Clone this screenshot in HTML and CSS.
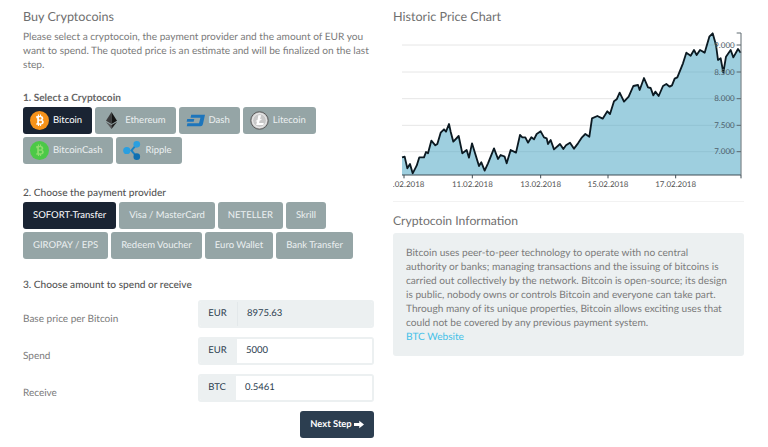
FILE: index.html
```html
<!DOCTYPE html>
<html lang="en">
<head>
<meta charset="utf-8">
<title>Buy Cryptocoins</title>
<link rel="stylesheet" href="styles.css">
</head>
<body>
<main class="page">
  <section class="col">
    <h2 class="title">Buy Cryptocoins</h2>
    <p class="intro">Please select a cryptocoin, the payment provider and the amount of EUR you want to spend. The quoted price is an estimate and will be finalized on the last step.</p>

    <h3 class="step step-first">1. Select a Cryptocoin</h3>
    <div class="btns">
      <button class="btn coin active"><svg class="ico" viewBox="0 0 20 20"><circle cx="10" cy="10" r="10" fill="#f7931a"/><path fill="#fff" fill-rule="evenodd" d="M6.6 5.2h1.7V3.8h1.2v1.4h1V3.8h1.2v1.5c1.5.3 2.3 1.1 2.3 2.3 0 .9-.4 1.6-1.2 1.9 1.1.3 1.7 1.1 1.7 2.2 0 1.5-1.1 2.5-2.8 2.6v1.5h-1.2v-1.4h-1v1.4H8.3v-1.4H6.6v-1.4h1v-5.4h-1zM9.400 6.700v2.300h1.500c.8 0 1.200-.4 1.200-1.100s-.4-1.200-1.200-1.200zM9.400 10.300v2.600h1.800c.9 0 1.400-.5 1.400-1.300s-.5-1.300-1.400-1.300z"/></svg>Bitcoin</button>
      <button class="btn coin"><svg class="ico" viewBox="0 0 20 20"><path fill="#3c3c3d" d="M10 1 4.200 10.300 10 13.700z"/><path fill="#141414" d="M10 1l5.800 9.300L10 13.700z"/><path fill="#5a5a5b" d="M4.200 11.500 10 19v-4.200z"/><path fill="#222" d="M15.800 11.500 10 19v-4.200z"/></svg>Ethereum</button>
      <button class="btn coin"><svg class="ico" viewBox="0 0 20 20"><path fill="#1c75bc" d="M5.500 4H20l-2.200 10a2.600 2.600 0 0 1-2.600 2H.8l.7-3.200h12.200l1.500-5.600H4.800z"/><path fill="#1c75bc" d="M1.300 8.500h7.400l-.6 2.800H.7z"/></svg>Dash</button>
      <button class="btn coin"><svg class="ico" viewBox="0 0 20 20"><circle cx="10" cy="10" r="9.200" fill="#c8c8c8" stroke="#555" stroke-width="1"/><circle cx="10" cy="10" r="7.300" fill="none" stroke="#f2f2f2" stroke-width="1"/><path fill="#fff" d="M8.800 4.500h2.800l-1 4.200 1.700-.6-.4 1.300-1.700.6-.7 2.700h5l-.5 2H6.500l1-3.900-1.500.6.300-1.200 1.600-.6z"/></svg>Litecoin</button>
      <button class="btn coin"><svg class="ico" viewBox="0 0 20 20"><circle cx="10" cy="10" r="10" fill="#4cc947"/><path fill="#8fdc6e" fill-rule="evenodd" d="M6.600 5.200h1.700V3.800h1.200v1.400h1V3.800h1.200v1.500c1.500.3 2.300 1.100 2.300 2.300 0 .9-.4 1.600-1.200 1.900 1.100.3 1.700 1.100 1.700 2.200 0 1.500-1.100 2.500-2.800 2.600v1.500h-1.200v-1.400h-1v1.400H8.300v-1.400H6.600v-1.400h1v-5.400h-1zM9.400 6.700v2.300h1.500c.8 0 1.200-.4 1.200-1.100s-.4-1.200-1.200-1.200zM9.400 10.300v2.600h1.800c.9 0 1.400-.5 1.400-1.300s-.5-1.300-1.400-1.300z"/></svg>BitcoinCash</button>
      <button class="btn coin"><svg class="ico" viewBox="0 0 20 20"><path fill="none" stroke="#1a82c4" stroke-width="2.200" d="M14.500 3.500 10 8.600a3 3 0 0 1-1 1.400 3 3 0 0 1 1 1.400l4.500 5.100"/><circle cx="14.500" cy="3.500" r="3.500" fill="#2a9fe0"/><circle cx="4" cy="10" r="3.800" fill="#2a9fe0"/><circle cx="14.500" cy="16.500" r="3.500" fill="#0f6fb0"/></svg>Ripple</button>
    </div>

    <h3 class="step step-light step-second">2. Choose the payment provider</h3>
    <div class="btns">
      <button class="btn active">SOFORT-Transfer</button>
      <button class="btn">Visa / MasterCard</button>
      <button class="btn">NETELLER</button>
      <button class="btn">Skrill</button>
      <button class="btn">GIROPAY / EPS</button>
      <button class="btn">Redeem Voucher</button>
      <button class="btn">Euro Wallet</button>
      <button class="btn">Bank Transfer</button>
    </div>

    <h3 class="step step-light step-third">3. Choose amount to spend or receive</h3>
    <div class="form">
      <div class="form-row">
        <span class="label">Base price per Bitcoin</span>
        <div class="group readonly"><span class="addon">EUR</span><span class="value">8975.63</span></div>
      </div>
      <div class="form-row">
        <span class="label">Spend</span>
        <div class="group"><span class="addon">EUR</span><span class="value">5000</span></div>
      </div>
      <div class="form-row">
        <span class="label">Receive</span>
        <div class="group"><span class="addon addon-btc">BTC</span><span class="value">0.5461</span></div>
      </div>
    </div>
    <div class="actions">
      <button class="next">Next Step<svg class="arrow" viewBox="0 0 12 10"><path fill="#fff" d="M0 3.200h6.300V.4L12 5 6.300 9.600V6.800H0z"/></svg></button>
    </div>
  </section>

  <section class="col">
    <h2 class="title">Historic Price Chart</h2>
    <svg class="chart" viewBox="27 90 1050 495">
      <g class="grid">
        <path d="M54 135H1071M54 216H1071M54 296H1071M54 376H1071M54 455H1071"/>
      </g>
      <path class="area" d="M54 525V472L62 470 70 505 78 492 86 520 98 497 106 472 120 472 126 456 132 460 142 422 154 436 160 432 170 398 180 388 186 395 195 372 200 395 208 425 224 408 235 460 248 450 255 473 264 430 285 498 292 487 302 512 312 490 330 445 342 477 350 465 362 470 368 490 380 450 396 458 408 405 415 412 424 412 432 428 442 412 450 418 458 402 470 394 480 412 488 415 492 432 500 420 510 448 528 432 538 447 546 436 552 432 558 428 570 446 582 430 594 412 604 402 616 410 624 355 640 348 656 356 670 334 678 342 690 304 698 298 707 278 720 305 734 290 748 258 762 255 767 270 780 234 792 262 800 264 808 286 814 275 824 288 837 258 847 252 857 260 864 256 872 236 880 232 897 190 907 158 920 167 930 150 938 165 948 150 962 158 976 110 986 100 996 135 1002 180 1010 175 1018 218 1026 170 1040 150 1048 172 1062 147 1070 158V525z"/>
      <path class="line" d="M54 472L62 470 70 505 78 492 86 520 98 497 106 472 120 472 126 456 132 460 142 422 154 436 160 432 170 398 180 388 186 395 195 372 200 395 208 425 224 408 235 460 248 450 255 473 264 430 285 498 292 487 302 512 312 490 330 445 342 477 350 465 362 470 368 490 380 450 396 458 408 405 415 412 424 412 432 428 442 412 450 418 458 402 470 394 480 412 488 415 492 432 500 420 510 448 528 432 538 447 546 436 552 432 558 428 570 446 582 430 594 412 604 402 616 410 624 355 640 348 656 356 670 334 678 342 690 304 698 298 707 278 720 305 734 290 748 258 762 255 767 270 780 234 792 262 800 264 808 286 814 275 824 288 837 258 847 252 857 260 864 256 872 236 880 232 897 190 907 158 920 167 930 150 938 165 948 150 962 158 976 110 986 100 996 135 1002 180 1010 175 1018 218 1026 170 1040 150 1048 172 1062 147 1070 158"/>
      <path class="axis" d="M54 525H1071M60 525v10M265 525v10M470 525v10M672 525v10M875 525v10M1071 525v10"/>
      <path class="axis-y" d="M1058 99H1071V525M1058 135h13M1058 216h13M1058 296h13M1058 376h13M1058 455h13"/>
      <g class="xlabels">
        <text x="60" y="561">09.02.2018</text>
        <text x="265" y="561">11.02.2018</text>
        <text x="470" y="561">13.02.2018</text>
        <text x="672" y="561">15.02.2018</text>
        <text x="875" y="561">17.02.2018</text>
      </g>
      <g class="ylabels">
        <text x="1052" y="143">9.000</text>
        <text x="1052" y="224">8.500</text>
        <text x="1052" y="304">8.000</text>
        <text x="1052" y="384">7.500</text>
        <text x="1052" y="463">7.000</text>
      </g>
    </svg>
    <hr class="rule">
    <h2 class="title title-info">Cryptocoin Information</h2>
    <div class="info">Bitcoin uses peer-to-peer technology to operate with no central authority or banks; managing transactions and the issuing of bitcoins is carried out collectively by the network. Bitcoin is open-source; its design is public, nobody owns or controls Bitcoin and everyone can take part. Through many of its unique properties, Bitcoin allows exciting uses that could not be covered by any previous payment system.<br><a href="#" class="link">BTC Website</a></div>
  </section>
</main>
</body>
</html>
```
FILE: styles.css
```css
* { box-sizing: border-box; }
html, body { margin: 0; padding: 0; background: #fff; }
body {
  font-family: Lato, "Open Sans", sans-serif;
  font-size: 10.150px;
  line-height: 14px;
  color: #7b7b7b;
  overflow: hidden;
  text-rendering: geometricPrecision;
}
.page {
  width: 768px;
  height: 447px;
  padding: 7px 24px 0 23px;
  display: grid;
  grid-template-columns: 351px 351px;
  column-gap: 19px;
}
.col { min-width: 0; display: flex; flex-direction: column; }
.title {
  margin: 0;
  font-size: 12.600px;
  line-height: 20px;
  font-weight: 400;
  color: #6f6f6f;
}
.intro { margin: 3px 0 0; }
.step {
  margin: 21px 0 3px;
  font-size: 10.100px;
  line-height: 14px;
  font-weight: 700;
  color: #666;
}
.step-light { font-weight: 500; color: #555; font-size: 10.150px; }
.step-first { margin-top: 19px; margin-bottom: 2px; }
.step-second { margin-top: 22px; margin-bottom: 2px; }
.step-third { margin-top: 19px; margin-bottom: 8px; }
.btns { display: flex; flex-wrap: wrap; gap: 3px; width: 351px; }
.btn {
  height: 27px;
  padding: 0 10px;
  border: 0;
  border-radius: 3px;
  background: #95a5a6;
  color: #ecf0f1;
  font: 400 9.500px/14px Lato, sans-serif;
  text-rendering: geometricPrecision;
  display: inline-flex;
  align-items: center;
}
.btn.active { background: #1a2433; color: #fff; }
.coin { padding-left: 7px; }
.ico { width: 19px; height: 19px; margin-right: 4px; flex: none; }
.form { display: flex; flex-direction: column; gap: 9px; }
.form-row { display: flex; height: 28px; }
.label { width: 175px; padding-top: 12px; font-size: 10px; }
.group {
  width: 176px;
  display: flex;
  border: 2px solid #ecf0f1;
  border-radius: 3px;
  color: #2c3e50;
  overflow: hidden;
  font-size: 9.500px;
}
.addon {
  width: 37px;
  background: #ecf0f1;
  display: flex;
  align-items: center;
  justify-content: center;
  padding-right: 2px;
}
.addon-btc { width: 36px; }
.value {
  flex: 1;
  background: #fff;
  display: flex;
  align-items: center;
  padding-left: 9px;
}
.readonly .value { background: #ecf0f1; border-left: 1px solid #e3e8ea; }
.actions { display: flex; justify-content: flex-end; margin-top: 9px; }
.next {
  width: 74px;
  height: 27px;
  border: 0;
  border-radius: 3px;
  background: #2c3e50;
  color: #fff;
  font: 700 9.400px/14px Lato, sans-serif;
  text-rendering: geometricPrecision;
  display: inline-flex;
  align-items: center;
  justify-content: center;
  gap: 2px;
  padding: 0;
}
.arrow { width: 10px; height: 9px; }
.chart { display: block; width: 350px; height: 165px; margin-top: 3px; overflow: hidden; flex: none; }
.grid path { fill: none; stroke: #e6e6e6; stroke-width: 3; }
.area { fill: #3d9fbf; fill-opacity: .5; }
.line { fill: none; stroke: #0c1a22; stroke-width: 5.500; stroke-linejoin: round; }
.axis { fill: none; stroke: #3f4d55; stroke-width: 3; }
.axis-y { fill: none; stroke: #5e6a70; stroke-width: 3; }
.xlabels text { font-family: Lato, sans-serif; font-size: 24px; fill: #555; text-anchor: middle; }
.ylabels text { font-family: Lato, sans-serif; font-size: 24px; fill: #4f616c; text-anchor: end; }
.rule { width: 100%; margin: 6px 0 0; border: 0; border-top: 1px solid #f2f2f2; }
.title-info { margin-top: 9px; font-size: 12.200px; }
.info {
  margin-top: 2px;
  padding: 13px 13px 12px;
  background: #ecf0f1;
  border-radius: 3px;
}
.link { color: #45c1e8; text-decoration: none; }
```
